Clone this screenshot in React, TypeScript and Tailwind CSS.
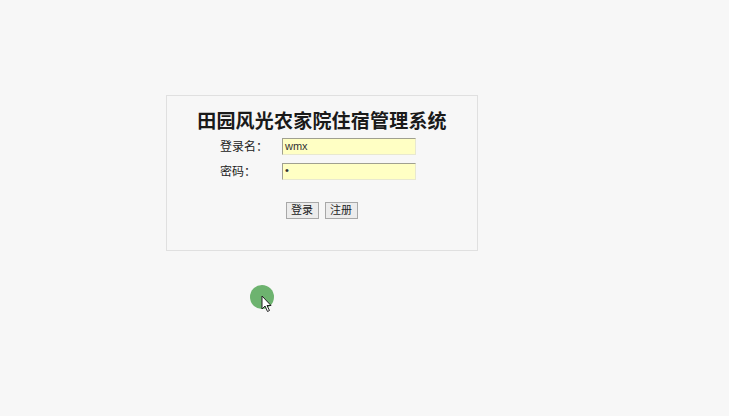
export default function App() {
  return (
    <div className="relative min-h-[416px] w-full bg-[#f7f7f7] pt-[95px] pl-[166px] font-['Liberation_Sans','Noto_Sans_CJK_SC',sans-serif] text-[12px] text-[#222]">
      <div className="flex h-[156px] w-[312px] flex-col items-center border border-[#e0e0e0] bg-[#f7f7f7]">
        <h1 className="mt-[13px] text-[19px] font-bold leading-[26px] tracking-[0.2px] text-[#1a1a1a]">
          田园风光农家院住宿管理系统
        </h1>
        <div className="mt-[3px] flex flex-col gap-[8px] self-start pl-[53px]">
          <div className="flex items-center">
            <span className="w-[62px] leading-[16px]">登录名：</span>
            <div className="h-[17px] w-[134px] border border-[#a0a090] border-r-[#e8e8d0] border-b-[#e8e8d0] bg-[#ffffc4] pl-[2px] text-[11px] leading-[15px] text-[#333]">
              wmx
            </div>
          </div>
          <div className="flex items-center">
            <span className="w-[62px] leading-[16px]">密码：</span>
            <div className="h-[17px] w-[134px] border border-[#a0a090] border-r-[#e8e8d0] border-b-[#e8e8d0] bg-[#ffffc4] pl-[2px] text-[11px] leading-[13px] text-[#333]">
              •
            </div>
          </div>
        </div>
        <div className="mt-[22px] flex gap-[6px] pr-[1px]">
          <button className="h-[17px] w-[33px] border border-[#a8a8a8] bg-[#ececec] text-[11px] leading-[15px]">
            登录
          </button>
          <button className="h-[17px] w-[33px] border border-[#a8a8a8] bg-[#ececec] text-[11px] leading-[15px]">
            注册
          </button>
        </div>
      </div>
      <div className="absolute left-[250px] top-[285px] h-[24px] w-[24px] rounded-full bg-[#6db36f]" />
      <svg className="absolute left-[261px] top-[295px]" width="12" height="18" viewBox="0 0 12 18">
        <path d="M1 1 L1 14 L4 11 L6.5 16.5 L8.5 15.5 L6 10.5 L10 10.5 Z" fill="#fff" stroke="#222" strokeWidth="1" strokeLinejoin="round" />
      </svg>
    </div>
  );
}
